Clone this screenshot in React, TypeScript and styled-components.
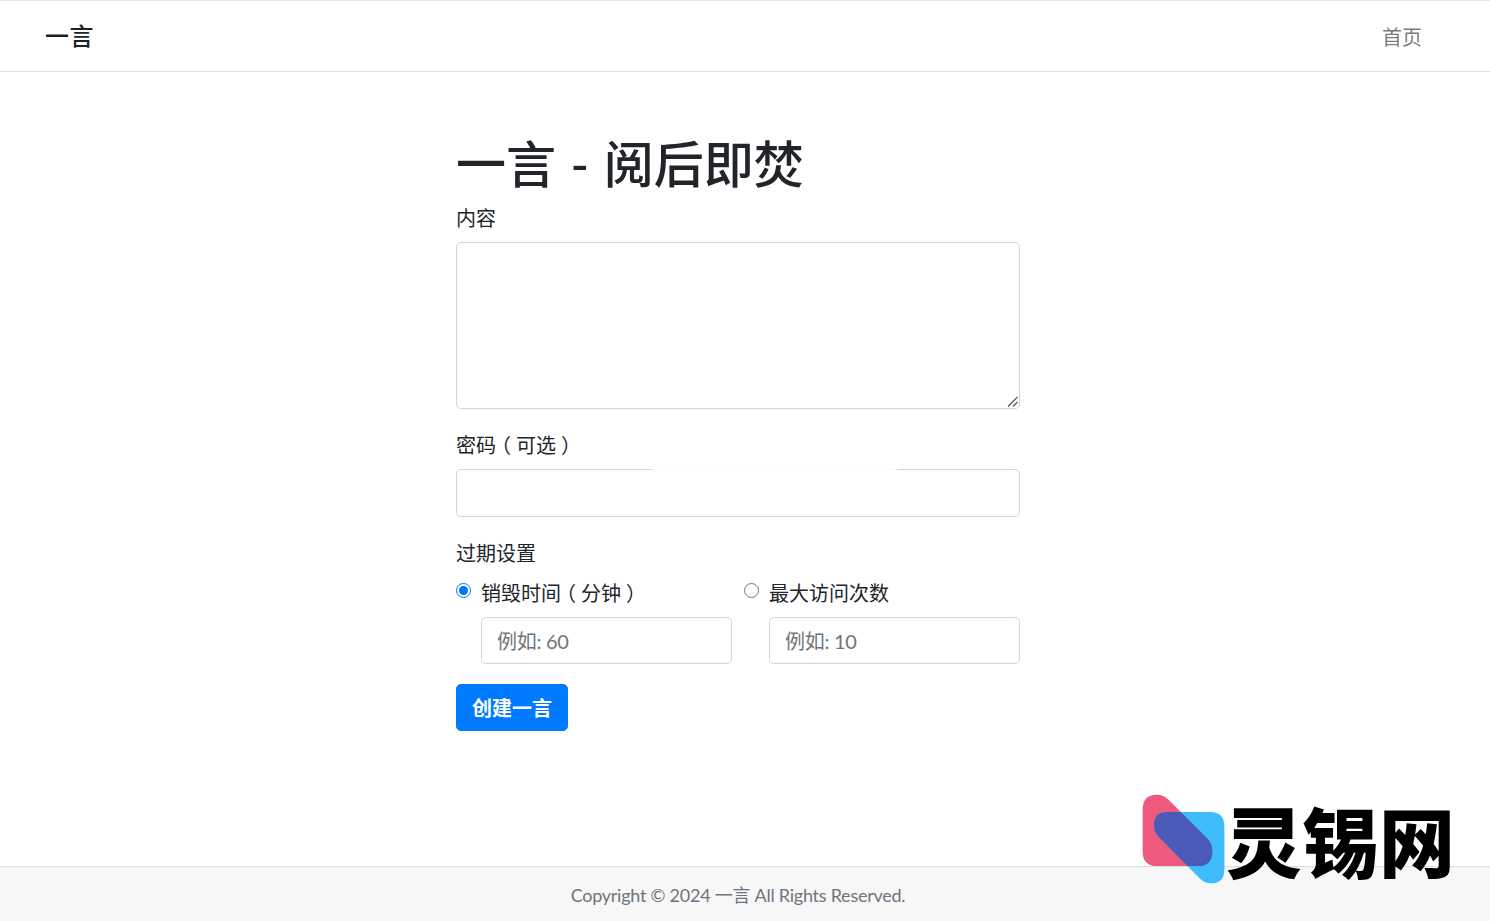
import { FC } from 'react';
import styled, { createGlobalStyle } from 'styled-components';

const GlobalStyle = createGlobalStyle`
  html, body {
    margin: 0;
    padding: 0;
    background: #ffffff;
  }

  body {
    font-family: Lato, 'Noto Sans CJK SC', sans-serif;
    font-size: 20px;
    line-height: 30px;
    color: #212529;
  }

  * {
    box-sizing: border-box;
  }
`;

const Page = styled.div`
  position: relative;
  min-height: 100vh;
  display: flex;
  flex-direction: column;
  overflow: hidden;
`;

const Navbar = styled.nav`
  height: 72px;
  display: flex;
  align-items: center;
  justify-content: space-between;
  padding: 2px 68px 0 45px;
  background: #ffffff;
  border-top: 1px solid #e5e5e5;
  border-bottom: 1px solid #e0e0e0;
`;

const Brand = styled.a`
  padding-bottom: 3px;
  font-size: 24px;
  font-weight: 500;
  letter-spacing: 0.5px;
  color: rgba(0, 0, 0, 0.9);
`;

const NavLink = styled.a`
  font-size: 20px;
  color: rgba(0, 0, 0, 0.55);
`;

const Main = styled.main`
  width: 564px;
  margin-left: 456px;
  padding-top: 62px;
`;

const Title = styled.h1`
  margin: 0 0 8px;
  font-size: 50px;
  line-height: 60px;
  font-weight: 500;
  word-spacing: 2px;
  color: #212529;
`;

const FormGroup = styled.div`
  margin-bottom: 20px;
`;

const Label = styled.label`
  display: block;
  padding-top: 1px;
  margin-bottom: 9px;
`;

// full-width brackets sit centred in their box in the reference
const Paren = styled.span`
  display: inline-block;
  width: 20px;
  line-height: 0;
  text-align: center;
  font-feature-settings: 'halt';
`;

const TextAreaWrap = styled.div`
  position: relative;
`;

const TextArea = styled.textarea`
  display: block;
  width: 100%;
  height: 167px;
  padding: 8px 16px;
  font: inherit;
  background: #ffffff;
  border: 1px solid #ced4da;
  border-radius: 4.8px;
  resize: vertical;
  outline: none;
`;

const Grip = styled.svg`
  position: absolute;
  right: 2px;
  bottom: 2px;
  width: 11px;
  height: 11px;
  background: #ffffff;
  pointer-events: none;
`;

const Input = styled.input<{ $tall?: boolean }>`
  display: block;
  width: 100%;
  height: ${props => (props.$tall ? '48px' : '47px')};
  padding: 8px 15px;
  font: inherit;
  letter-spacing: -0.3px;
  color: #495057;
  background: #ffffff;
  border: 1px solid #ced4da;
  border-radius: 4.8px;
  outline: none;

  &::placeholder {
    color: #6c757d;
    opacity: 1;
  }
`;

const PasswordWrap = styled.div`
  position: relative;
`;

// white gap on the field's top edge, as in the reference
const BorderFade = styled.div`
  position: absolute;
  top: -3px;
  left: 196px;
  width: 245px;
  height: 7px;
  background: #ffffff;
  filter: blur(2px);
`;

const ExpiryGrid = styled.div`
  display: grid;
  grid-template-columns: 276px 276px;
  column-gap: 12px;
  padding-top: 2px;
`;

const RadioRow = styled.label`
  display: flex;
  align-items: flex-start;
  gap: 10px;
  height: 30px;
  margin-bottom: 8px;
  line-height: 28px;
`;

const Radio = styled.input`
  width: 15px;
  height: 15px;
  margin: 4px 0 0;
  flex: none;
`;

const IndentedField = styled.div`
  margin-left: 25px;
`;

const SubmitButton = styled.button`
  display: block;
  width: 112px;
  height: 47px;
  padding: 1px 0 0;
  font: inherit;
  font-weight: 700;
  color: #ffffff;
  background: #007bff;
  border: 1px solid #007bff;
  border-radius: 4.8px;
`;

const Footer = styled.footer`
  margin-top: auto;
  height: 55px;
  padding: 1px 14px 0 0;
  display: flex;
  align-items: center;
  justify-content: center;
  font-size: 18px;
  letter-spacing: -0.25px;
  color: #6c757d;
  background: #f7f7f7;
  border-top: 1px solid #dddddd;
`;

const Watermark = styled.div`
  position: absolute;
  left: 1140px;
  top: 793px;
  display: flex;
  align-items: flex-start;
`;

const WatermarkText = styled.span`
  margin-left: -1px;
  font-family: 'Noto Sans CJK SC', sans-serif;
  font-size: 76px;
  line-height: 93px;
  font-weight: 900;
  letter-spacing: 0.5px;
  white-space: nowrap;
  color: #000000;
`;

const PINK =
  'M67 90 Q67 45 110 45 Q130 45 145 60 L262 177 Q277 192 277 215 Q277 260 235 260 L110 260 Q67 260 67 215 Z';
const BLUE =
  'M140 97 L270 97 Q313 97 313 140 L313 270 Q313 312 272 312 Q255 312 240 298 L115 172 Q100 155 101 135 Q103 97 140 97 Z';

const WatermarkIcon: FC = () => (
  <svg width="87" height="93" viewBox="60 40 260 280" style={{ flex: 'none' }}>
    <defs>
      <clipPath id="blue-clip">
        <path d={BLUE} />
      </clipPath>
    </defs>
    <path d={PINK} fill="#ee5a7e" />
    <path d={BLUE} fill="#3fbcfb" />
    <path d={PINK} fill="#4a5ab8" clipPath="url(#blue-clip)" />
  </svg>
);

const App: FC = () => (
  <Page>
    <GlobalStyle />
    <Navbar>
      <Brand>一言</Brand>
      <NavLink>首页</NavLink>
    </Navbar>
    <Main>
      <Title>一言 - 阅后即焚</Title>
      <FormGroup>
        <Label>内容</Label>
        <TextAreaWrap>
          <TextArea />
          <Grip viewBox="0 0 11 11">
            <path d="M1 10.5 L10.5 1 M6 10.5 L10.5 6" stroke="#555555" strokeWidth="1.2" fill="none" />
          </Grip>
        </TextAreaWrap>
      </FormGroup>
      <FormGroup>
        <Label>
          密码<Paren>（</Paren>可选<Paren>）</Paren>
        </Label>
        <PasswordWrap>
          <Input type="password" $tall />
          <BorderFade />
        </PasswordWrap>
      </FormGroup>
      <FormGroup>
        <Label>过期设置</Label>
        <ExpiryGrid>
          <div>
            <RadioRow>
              <Radio type="radio" name="expiry" defaultChecked />
              <span>
                销毁时间<Paren>（</Paren>分钟<Paren>）</Paren>
              </span>
            </RadioRow>
            <IndentedField>
              <Input placeholder="例如: 60" />
            </IndentedField>
          </div>
          <div>
            <RadioRow>
              <Radio type="radio" name="expiry" />
              最大访问次数
            </RadioRow>
            <IndentedField>
              <Input placeholder="例如: 10" />
            </IndentedField>
          </div>
        </ExpiryGrid>
      </FormGroup>
      <SubmitButton type="button">创建一言</SubmitButton>
    </Main>
    <Footer>Copyright © 2024 一言 All Rights Reserved.</Footer>
    <Watermark>
      <WatermarkIcon />
      <WatermarkText>灵锡网</WatermarkText>
    </Watermark>
  </Page>
);

export default App;
